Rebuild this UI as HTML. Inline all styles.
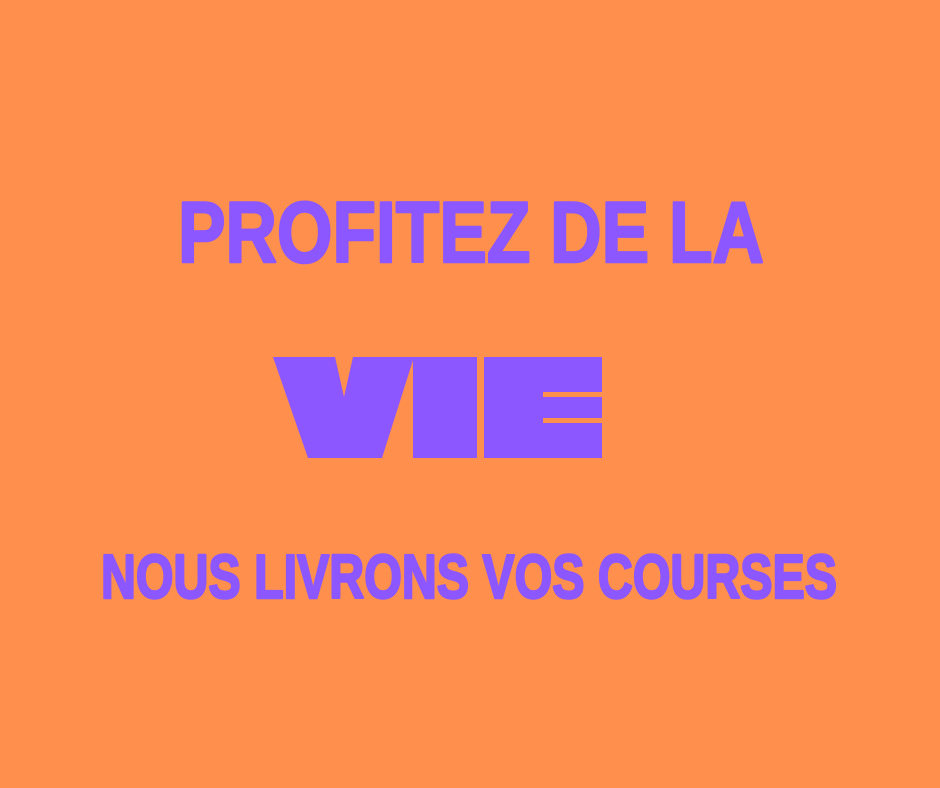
<!DOCTYPE html>
<html><head><meta charset="utf-8"><style>
html,body{margin:0;padding:0;background:#FF8F4C;}
svg{display:block}
</style></head><body>
<svg width="940" height="788" viewBox="0 0 940 788" xmlns="http://www.w3.org/2000/svg">
<rect width="940" height="788" fill="#FF8F4C"/>
<g fill="#8C57FF">
<text x="178" y="262" font-family="Liberation Sans, sans-serif" font-weight="bold" font-size="86" textLength="586" lengthAdjust="spacingAndGlyphs" stroke="#8C57FF" stroke-width="2.5" stroke-linejoin="round">PROFITEZ DE LA</text>
<text x="101" y="598" font-family="Liberation Sans, sans-serif" font-weight="bold" font-size="62" textLength="736" lengthAdjust="spacingAndGlyphs" stroke="#8C57FF" stroke-width="2.5" stroke-linejoin="round">NOUS LIVRONS VOS COURSES</text>
<polygon points="273,357 335,357 344,397 353,357 414,357 382,458 308,458"/>
<rect x="413" y="357" width="64" height="101"/>
<path d="M484,357 H602 V392 H543 V397 H602 V418 H543 V423 H602 V458 H484 Z"/>
</g>
</svg>
</body></html>
